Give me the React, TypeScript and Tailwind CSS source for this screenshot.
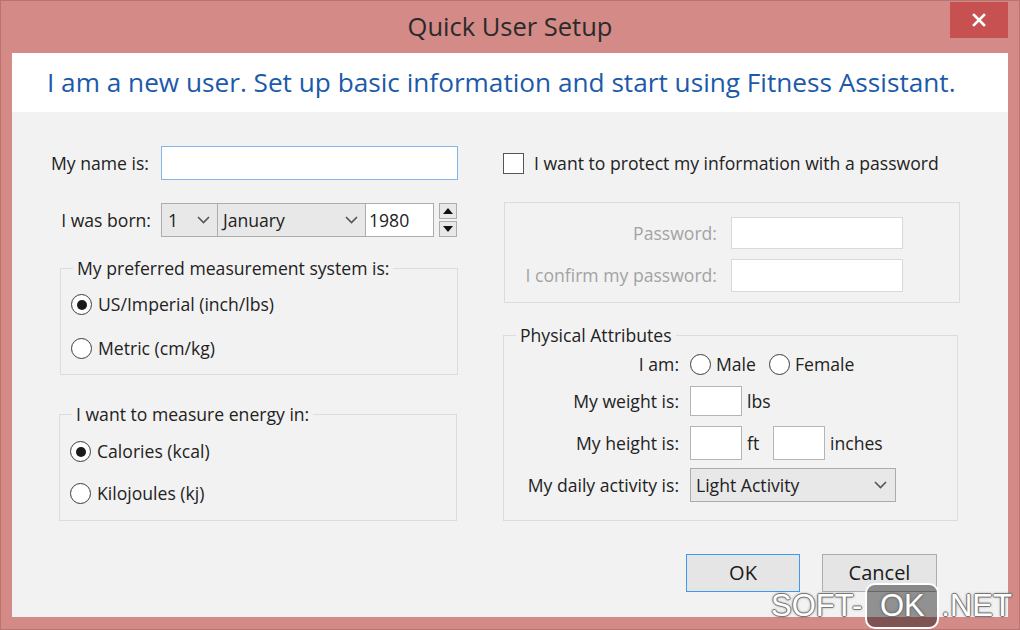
import React from "react";

const font = { fontFamily: '"Open Sans", "Noto Sans", sans-serif' };

const Chevron = () => (
  <svg width="13" height="8" viewBox="0 0 13 8" className="shrink-0">
    <path d="M1 1 L6.5 6.5 L12 1" fill="none" stroke="#555" strokeWidth="1.6" />
  </svg>
);

const Radio = ({ checked = false }: { checked?: boolean }) => (
  <span className="w-[21px] h-[21px] rounded-full border border-[#3c3c3c] bg-white flex items-center justify-center shrink-0">
    {checked && <span className="w-[10px] h-[10px] rounded-full bg-[#1a1a1a]" />}
  </span>
);

const GroupBox = ({
  legend,
  className,
  children,
}: {
  legend?: string;
  className: string;
  children: React.ReactNode;
}) => (
  <div className={`relative border border-[#dcdcdc] ${className}`}>
    {legend && (
      <span className="absolute -top-[14px] left-[12px] bg-[#f2f2f2] px-[4px] leading-[26px]">
        {legend}
      </span>
    )}
    {children}
  </div>
);

export default function App() {
  return (
    <div
      style={font}
      className="relative w-[1020px] h-[630px] bg-[#d48a87] border border-[#b97370] flex flex-col text-[17.6px] text-[#222] overflow-hidden"
    >
      {/* title bar */}
      <div className="relative h-[52px] flex items-center justify-center shrink-0">
        <span className="text-[25.5px] text-[#2a2a2a] -mt-[1px]">Quick User Setup</span>
        <button className="absolute top-[1px] right-[11px] w-[58px] h-[36px] bg-[#c75050] flex items-center justify-center">
          <svg width="14" height="14" viewBox="0 0 14 14">
            <path d="M2 2 L12 12 M12 2 L2 12" stroke="#fff" strokeWidth="2.6" strokeLinecap="square" />
          </svg>
        </button>
      </div>

      {/* client area */}
      <div className="mx-[11px] mb-[12px] flex-1 flex flex-col bg-[#f2f2f2]">
        <div className="h-[59px] bg-white flex items-center pl-[35px] shrink-0">
          <span className="text-[26.2px] text-[#1c5aa9] whitespace-nowrap">
            I am a new user. Set up basic information and start using Fitness Assistant.
          </span>
        </div>

        <div className="flex pl-[35px]">
          {/* left column */}
          <div className="w-[411px] flex flex-col">
            <div className="mt-[34px] h-[34px] flex items-center">
              <span className="w-[114px] pr-[12px] text-right whitespace-nowrap">My name is:</span>
              <input className="w-[297px] h-[34px] bg-white border border-[#84b5e8] outline-none" />
            </div>

            <div className="mt-[23px] h-[34px] flex items-center">
              <span className="w-[114px] pr-[10px] text-right whitespace-nowrap">I was born:</span>
              <div className="flex h-[34px] border border-[#acacac]">
                <div className="w-[56px] bg-[#e8e8e8] flex items-center justify-between pl-[6px] pr-[7px] border-r border-[#acacac]">
                  <span>1</span>
                  <Chevron />
                </div>
                <div className="w-[148px] bg-[#e8e8e8] flex items-center justify-between pl-[5px] pr-[7px] border-r border-[#acacac]">
                  <span>January</span>
                  <Chevron />
                </div>
                <div className="w-[67px] bg-white flex items-center pl-[3px]">1980</div>
              </div>
              <div className="ml-[5px] flex flex-col gap-[2px]">
                <div className="w-[18px] h-[16px] bg-[#e8e8e8] border border-[#acacac] flex items-center justify-center">
                  <svg width="10" height="6" viewBox="0 0 10 6">
                    <path d="M0 6 L5 0 L10 6 Z" fill="#111" />
                  </svg>
                </div>
                <div className="w-[18px] h-[16px] bg-[#e8e8e8] border border-[#acacac] flex items-center justify-center">
                  <svg width="10" height="6" viewBox="0 0 10 6">
                    <path d="M0 0 L10 0 L5 6 Z" fill="#111" />
                  </svg>
                </div>
              </div>
            </div>

            <GroupBox legend="My preferred measurement system is:" className="ml-[13px] mt-[31px] w-[398px] h-[107px]">
              <div className="pl-[10px] pt-[25px] flex flex-col gap-[23px]">
                <label className="flex items-center gap-[6px] h-[21px]">
                  <Radio checked />
                  <span>US/Imperial (inch/lbs)</span>
                </label>
                <label className="flex items-center gap-[6px] h-[21px]">
                  <Radio />
                  <span>Metric (cm/kg)</span>
                </label>
              </div>
            </GroupBox>

            <GroupBox legend="I want to measure energy in:" className="ml-[12px] mt-[39px] w-[398px] h-[107px]">
              <div className="pl-[10px] pt-[26px] flex flex-col gap-[21px]">
                <label className="flex items-center gap-[6px] h-[21px]">
                  <Radio checked />
                  <span>Calories (kcal)</span>
                </label>
                <label className="flex items-center gap-[6px] h-[21px]">
                  <Radio />
                  <span>Kilojoules (kj)</span>
                </label>
              </div>
            </GroupBox>
          </div>

          {/* right column */}
          <div className="ml-[45px] w-[457px] flex flex-col">
            <label className="mt-[39px] h-[24px] flex items-center gap-[10px]">
              <span className="w-[21px] h-[21px] border border-[#555] bg-white shrink-0" />
              <span className="whitespace-nowrap">I want to protect my information with a password</span>
            </label>

            <GroupBox className="ml-[1px] mt-[27px] w-[456px] h-[101px]">
              <div className="pt-[14px] flex flex-col gap-[10px]">
                <div className="flex items-center">
                  <span className="w-[213px] pr-[1px] text-right text-[#a3a3a3] whitespace-nowrap">Password:</span>
                  <div className="ml-[13px] w-[172px] h-[32px] bg-white border border-[#d9d9d9]" />
                </div>
                <div className="flex items-center">
                  <span className="w-[213px] pr-[1px] text-right text-[#a3a3a3] whitespace-nowrap">I confirm my password:</span>
                  <div className="ml-[13px] w-[172px] h-[33px] bg-white border border-[#d9d9d9]" />
                </div>
              </div>
            </GroupBox>

            <GroupBox legend="Physical Attributes" className="mt-[32px] w-[455px] h-[186px]">
              <div className="pt-[15px] flex flex-col">
                <div className="h-[26px] flex items-center">
                  <span className="w-[175px] text-right whitespace-nowrap">I am:</span>
                  <label className="ml-[11px] flex items-center gap-[5px]">
                    <Radio />
                    <span>Male</span>
                  </label>
                  <label className="ml-[13px] flex items-center gap-[5px]">
                    <Radio />
                    <span>Female</span>
                  </label>
                </div>
                <div className="mt-[9px] h-[30px] flex items-center">
                  <span className="w-[175px] text-right whitespace-nowrap">My weight is:</span>
                  <div className="ml-[11px] w-[52px] h-[30px] bg-white border border-[#b5b5b5]" />
                  <span className="ml-[5px]">lbs</span>
                </div>
                <div className="mt-[10px] h-[34px] flex items-center">
                  <span className="w-[175px] text-right whitespace-nowrap">My height is:</span>
                  <div className="ml-[11px] w-[52px] h-[34px] bg-white border border-[#b5b5b5]" />
                  <span className="ml-[5px] w-[26px]">ft</span>
                  <div className="w-[52px] h-[34px] bg-white border border-[#b5b5b5]" />
                  <span className="ml-[5px]">inches</span>
                </div>
                <div className="mt-[8px] h-[34px] flex items-center">
                  <span className="w-[175px] text-right whitespace-nowrap">My daily activity is:</span>
                  <div className="ml-[11px] w-[206px] h-[34px] bg-[#e8e8e8] border border-[#acacac] flex items-center justify-between pl-[5px] pr-[8px]">
                    <span>Light Activity</span>
                    <Chevron />
                  </div>
                </div>
              </div>
            </GroupBox>
          </div>
        </div>

        {/* buttons */}
        <div className="mt-[33px] flex justify-end gap-[22px] pr-[71px]">
          <button className="w-[114px] h-[38px] bg-[#e5e5e5] border border-[#3c9af0] text-[20px] text-[#1a1a1a]">
            OK
          </button>
          <button className="w-[115px] h-[38px] bg-[#e5e5e5] border border-[#adadad] text-[20px] text-[#1a1a1a]">
            Cancel
          </button>
        </div>
      </div>

      {/* watermark overlay */}
      <div
        className="absolute left-[770px] top-[582px] flex items-center text-[31px] text-white [text-shadow:1px_0_0_#777,-1px_0_0_#777,0_1px_0_#777,0_-1px_0_#777,0_0_3px_#555]"
        style={{ fontFamily: '"Liberation Sans", Arial, sans-serif' }}
      >
        <span>SOFT-</span>
        <span className="ml-[3px] w-[74px] h-[46px] rounded-[10px] border-2 border-white bg-black/40 flex items-center justify-center">
          OK
        </span>
        <span className="ml-[2px]">.NET</span>
      </div>
    </div>
  );
}
